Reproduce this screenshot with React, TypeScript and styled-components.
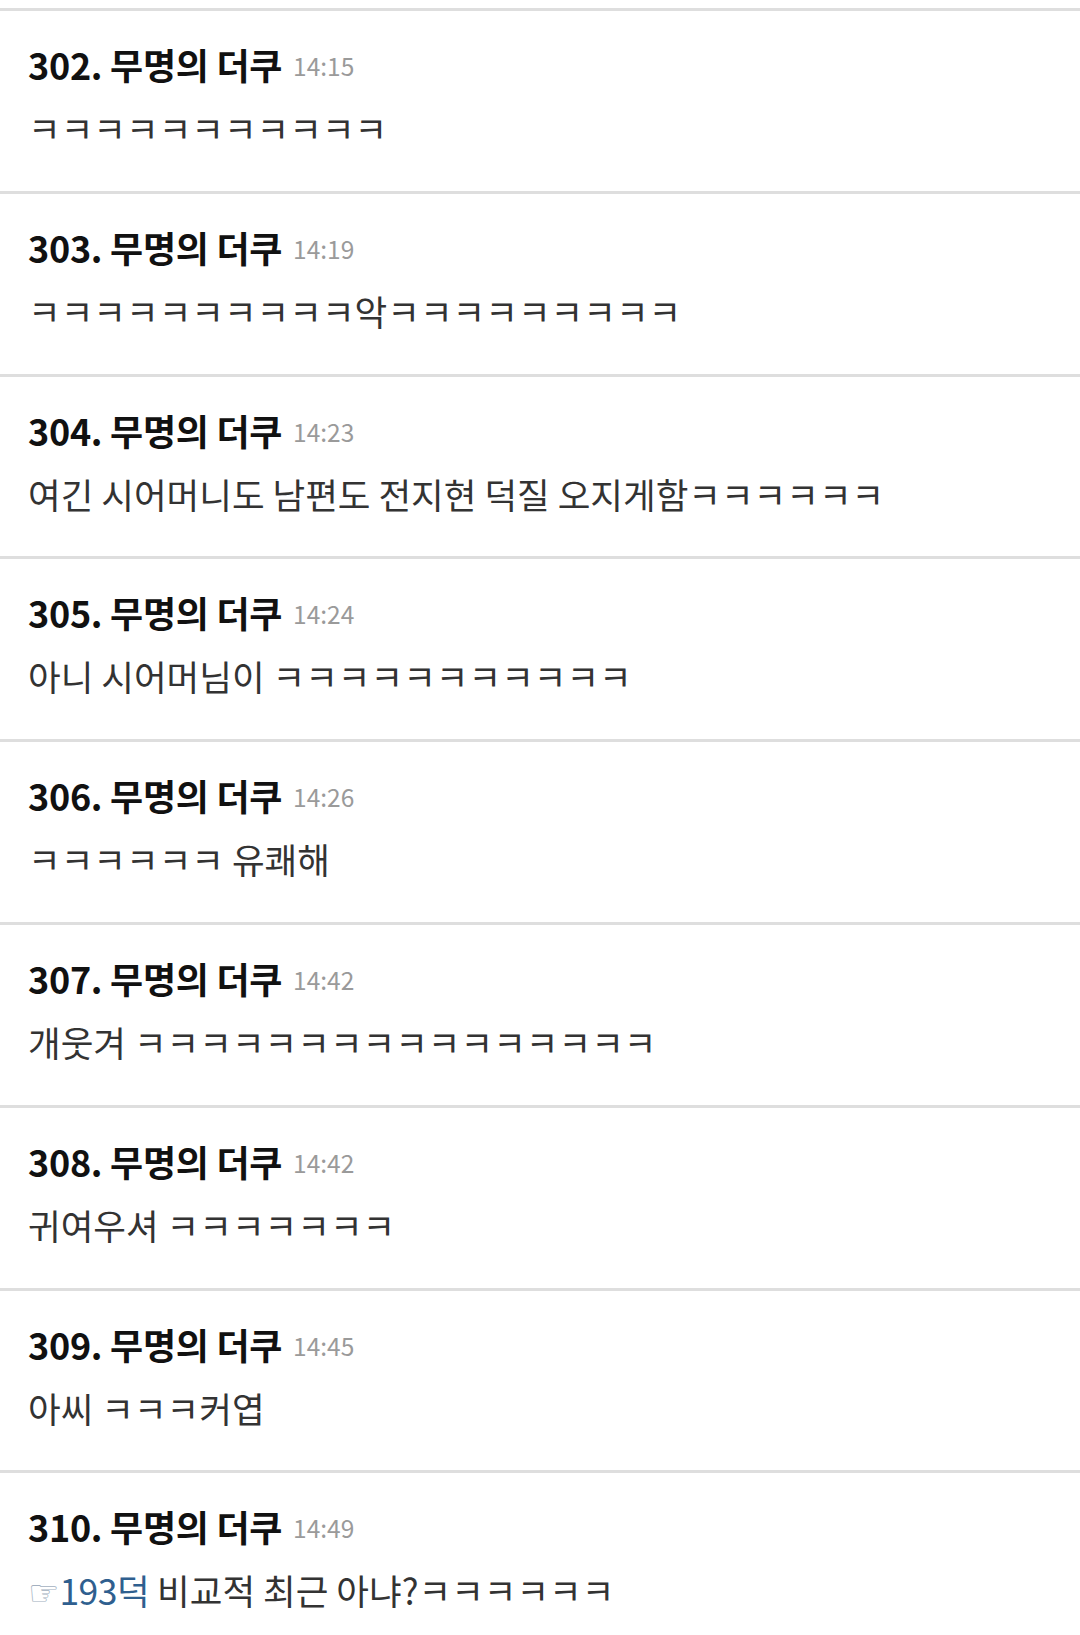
import React from "react";
import styled, { createGlobalStyle } from "styled-components";

const Global = createGlobalStyle`
  html, body { margin: 0; padding: 0; background: #ffffff; }
  body { font-family: "Noto Sans CJK KR", "Noto Sans", sans-serif; }
`;

const List = styled.div`
  padding-top: 8px;
  background: #fff;
`;

const Row = styled.section`
  box-sizing: border-box;
  height: 182.8px;
  border-top: 3px solid #dedede;
  padding: 31px 0 0 28px;
  display: flex;
  flex-direction: column;
  gap: 20px;
`;

const Header = styled.div`
  display: flex;
  align-items: center;
  gap: 11px;
  height: 44px;
`;

const Title = styled.span`
  font-size: 36px;
  line-height: 44px;
  font-weight: 700;
  color: #111;
  letter-spacing: -0.3px;
`;

const Time = styled.span`
  font-size: 24.5px;
  line-height: 40px;
  padding-top: 4px;
  color: #9a9a9a;
`;

const Body = styled.div`
  font-size: 35.5px;
  line-height: 44px;
  color: #333;
  white-space: nowrap;
`;

const Pointer = styled.span`
  font-family: "DejaVu Sans", sans-serif;
  font-size: 35px;
  line-height: 44px;
  color: #a3b0c0;
`;

const Anchor = styled.span`
  color: #2f5f8f;
  letter-spacing: -0.5px;
`;

type Item = { no: number; time: string; body: React.ReactNode };

const items: Item[] = [
  { no: 302, time: "14:15", body: "ㅋㅋㅋㅋㅋㅋㅋㅋㅋㅋㅋ" },
  { no: 303, time: "14:19", body: "ㅋㅋㅋㅋㅋㅋㅋㅋㅋㅋ악ㅋㅋㅋㅋㅋㅋㅋㅋㅋ" },
  { no: 304, time: "14:23", body: "여긴 시어머니도 남편도 전지현 덕질 오지게함ㅋㅋㅋㅋㅋㅋ" },
  { no: 305, time: "14:24", body: "아니 시어머님이 ㅋㅋㅋㅋㅋㅋㅋㅋㅋㅋㅋ" },
  { no: 306, time: "14:26", body: "ㅋㅋㅋㅋㅋㅋ 유쾌해" },
  { no: 307, time: "14:42", body: "개웃겨 ㅋㅋㅋㅋㅋㅋㅋㅋㅋㅋㅋㅋㅋㅋㅋㅋ" },
  { no: 308, time: "14:42", body: "귀여우셔 ㅋㅋㅋㅋㅋㅋㅋ" },
  { no: 309, time: "14:45", body: "아씨 ㅋㅋㅋ커엽" },
  {
    no: 310,
    time: "14:49",
    body: (
      <>
        <Pointer>☞</Pointer>
        <Anchor>193덕</Anchor> 비교적 최근 아냐?ㅋㅋㅋㅋㅋㅋ
      </>
    ),
  },
];

export default function App() {
  return (
    <>
      <Global />
      <List>
        {items.map((it) => (
          <Row key={it.no}>
            <Header>
              <Title>{it.no}. 무명의 더쿠</Title>
              <Time>{it.time}</Time>
            </Header>
            <Body>{it.body}</Body>
          </Row>
        ))}
      </List>
    </>
  );
}
